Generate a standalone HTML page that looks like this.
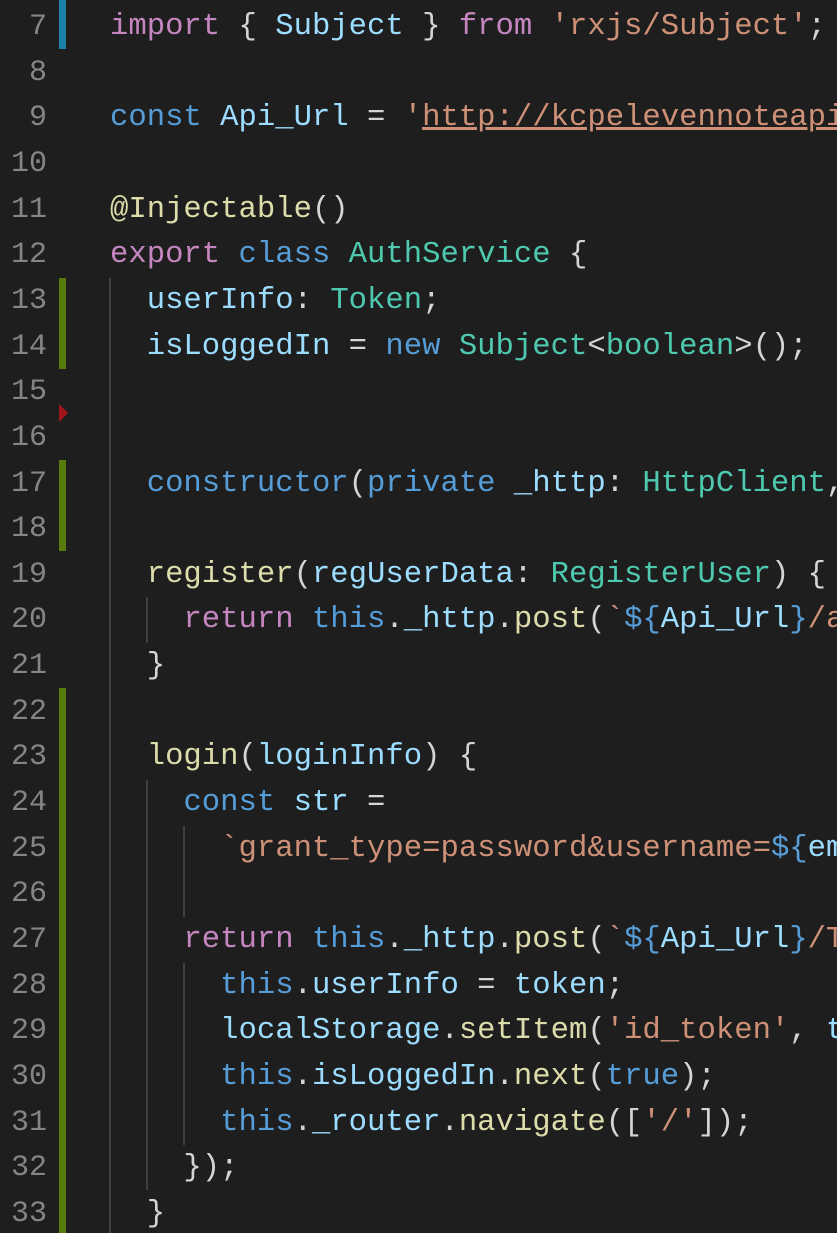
<!DOCTYPE html>
<html><head><meta charset="utf-8"><style>
html,body{margin:0;padding:0;background:#1e1e1e;width:837px;height:1233px;overflow:hidden}
#wrap{position:relative;width:837px;height:1233px;overflow:hidden}
.ln{position:absolute;left:0;width:47px;text-align:right;color:#858585;font:30px/45.65px "Liberation Mono",monospace}
.c{position:absolute;left:110px;width:727px;overflow:hidden;white-space:pre;color:#d4d4d4;font:30.6px/45.65px "Liberation Mono",monospace}
.g{position:absolute;width:2px;background:#404040}
.bar{position:absolute;left:59px;width:7px}
.k{color:#c586c0}.b{color:#569cd6}.v{color:#9cdcfe}.t{color:#4ec9b0}.s{color:#ce9178}.f{color:#dcdcaa}
</style></head><body><div id="wrap">
<div class="bar" style="top:0;height:49px;background:#1b81a8"></div>
<div class="bar" style="top:278px;height:91px;background:#587c0c"></div>
<div class="bar" style="top:460px;height:91px;background:#587c0c"></div>
<div class="bar" style="top:688px;height:545px;background:#587c0c"></div>
<div style="position:absolute;left:59px;top:404px;width:0;height:0;border-top:9px solid transparent;border-bottom:9px solid transparent;border-left:9px solid #a1151b"></div>
<div class="g" style="left:109px;top:278px;height:955px"></div>
<div class="g" style="left:146px;top:597px;height:46px"></div>
<div class="g" style="left:146px;top:780px;height:410px"></div>
<div class="g" style="left:183px;top:826px;height:91px"></div>
<div class="g" style="left:183px;top:963px;height:182px"></div>
<div id="lines"></div>
</div>
<script>
var L=[
[7,'<span class="k">import</span> { <span class="v">Subject</span> } <span class="k">from</span> <span class="s">\'rxjs/Subject\'</span>;'],
[8,''],
[9,'<span class="b">const</span> <span class="v">Api_Url</span> = <span class="s">\'<u>http://kcpelevennoteapi.azurewebsites.net</u>\'</span>;'],
[10,''],
[11,'<span class="f">@Injectable</span>()'],
[12,'<span class="k">export</span> <span class="b">class</span> <span class="t">AuthService</span> {'],
[13,'  <span class="v">userInfo</span>: <span class="t">Token</span>;'],
[14,'  <span class="v">isLoggedIn</span> = <span class="b">new</span> <span class="t">Subject</span>&lt;<span class="t">boolean</span>&gt;();'],
[15,''],[16,''],
[17,'  <span class="b">constructor</span>(<span class="b">private</span> <span class="v">_http</span>: <span class="t">HttpClient</span>, <span class="b">private</span>'],
[18,''],
[19,'  <span class="f">register</span>(<span class="v">regUserData</span>: <span class="t">RegisterUser</span>) {'],
[20,'    <span class="k">return</span> <span class="b">this</span>.<span class="v">_http</span>.<span class="f">post</span>(<span class="s">`</span><span class="b">${</span><span class="v">Api_Url</span><span class="b">}</span><span class="s">/api/Account</span>'],
[21,'  }'],
[22,''],
[23,'  <span class="f">login</span>(<span class="v">loginInfo</span>) {'],
[24,'    <span class="b">const</span> <span class="v">str</span> ='],
[25,'      <span class="s">`grant_type=password&amp;username=</span><span class="b">${</span><span class="v">email</span>'],
[26,''],
[27,'    <span class="k">return</span> <span class="b">this</span>.<span class="v">_http</span>.<span class="f">post</span>(<span class="s">`</span><span class="b">${</span><span class="v">Api_Url</span><span class="b">}</span><span class="s">/Token</span>'],
[28,'      <span class="b">this</span>.<span class="v">userInfo</span> = <span class="v">token</span>;'],
[29,'      <span class="v">localStorage</span>.<span class="f">setItem</span>(<span class="s">\'id_token\'</span>, <span class="v">token</span>'],
[30,'      <span class="b">this</span>.<span class="v">isLoggedIn</span>.<span class="f">next</span>(<span class="b">true</span>);'],
[31,'      <span class="b">this</span>.<span class="v">_router</span>.<span class="f">navigate</span>([<span class="s">\'/\'</span>]);'],
[32,'    });'],
[33,'  }']];
var h='';
L.forEach(function(a){var top=5+(a[0]-7)*45.65;
h+='<div class="ln" style="top:'+top+'px">'+a[0]+'</div><div class="c" style="top:'+top+'px">'+a[1]+'</div>';});
document.getElementById('lines').innerHTML=h;
</script>
</body></html>
